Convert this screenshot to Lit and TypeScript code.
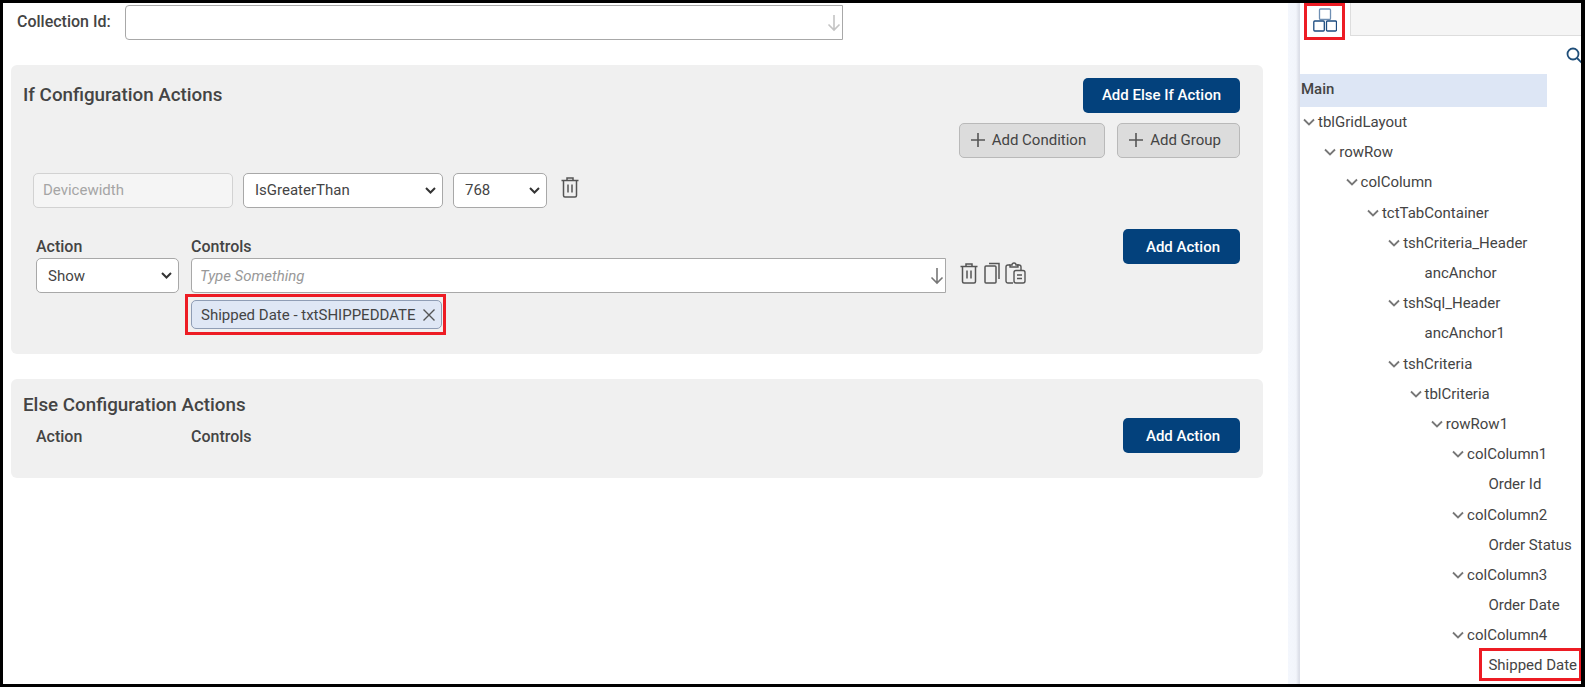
import { LitElement, html, css, svg } from 'lit';
import { customElement } from 'lit/decorators.js';

type Node = { label: string; level: number; open?: boolean; marked?: boolean };

const TREE: Node[] = [
    { label: 'tblGridLayout', level: 0, open: true },
    { label: 'rowRow', level: 1, open: true },
    { label: 'colColumn', level: 2, open: true },
    { label: 'tctTabContainer', level: 3, open: true },
    { label: 'tshCriteria_Header', level: 4, open: true },
    { label: 'ancAnchor', level: 5 },
    { label: 'tshSql_Header', level: 4, open: true },
    { label: 'ancAnchor1', level: 5 },
    { label: 'tshCriteria', level: 4, open: true },
    { label: 'tblCriteria', level: 5, open: true },
    { label: 'rowRow1', level: 6, open: true },
    { label: 'colColumn1', level: 7, open: true },
    { label: 'Order Id', level: 8 },
    { label: 'colColumn2', level: 7, open: true },
    { label: 'Order Status', level: 8 },
    { label: 'colColumn3', level: 7, open: true },
    { label: 'Order Date', level: 8 },
    { label: 'colColumn4', level: 7, open: true },
    { label: 'Shipped Date', level: 8, marked: true },
];

const arrowDown = (color: string) => html`<svg class="arrow" width="14" height="18" viewBox="0 0 14 18" fill="none" stroke=${color} stroke-width="1.6">
    <path d="M7 1v15M1.5 10.5L7 16l5.5-5.5"></path></svg>`;

const trashIcon = html`<svg width="20" height="22" viewBox="0 0 20 22" fill="none" stroke="#555" stroke-width="1.5">
    <path d="M1.5 4.5h17M7 4.500V2h6v2.500M3.500 4.500V19.500a1.500 1.500 0 0 0 1.500 1.500h10a1.500 1.500 0 0 0 1.500-1.500V4.500M8 8.500v8M12 8.500v8"></path></svg>`;

const copyIcon = html`<svg width="16" height="22" viewBox="0 0 16 22" fill="none" stroke="#555" stroke-width="1.5">
    <path d="M5 1.500h10v15.500"></path><rect x="1" y="4" width="11" height="17" rx="1"></rect></svg>`;

const pasteIcon = html`<svg width="21" height="22" viewBox="0 0 21 22" fill="none" stroke="#555" stroke-width="1.4">
    <path d="M8 21H3a2 2 0 0 1-2-2V5a2 2 0 0 1 2-2h2M12 3h2a2 2 0 0 1 2 2v3"></path>
    <path d="M5 5V3h2a2 2 0 0 1 4 0h2v2z"></path>
    <rect x="9" y="8.500" width="11" height="12.500" rx="2"></rect>
    <path d="M12 13h5M12 16.500h5"></path></svg>`;

const plusIcon = html`<svg width="14" height="14" viewBox="0 0 14 14" stroke="#555" stroke-width="1.6">
    <path d="M7 0v14M0 7h14"></path></svg>`;

const blocksIcon = html`<svg width="24" height="24" viewBox="0 0 24 24" fill="none" stroke-width="1.300">
    <rect x="6.500" y="1" width="11" height="10.500" rx="1" stroke="#6f8fb3"></rect>
    <rect x="0.800" y="13" width="10.500" height="10" rx="1" stroke="#1d4c80"></rect>
    <rect x="13.500" y="13" width="10" height="10" rx="1" stroke="#1d4c80"></rect></svg>`;

const chevron = svg`<path d="M1 1.500L6 6.500L11 1.500" fill="none" stroke="#777" stroke-width="1.800"></path>`;

@customElement('app-root')
export class AppRoot extends LitElement {
    static styles = css`
        :host {
            display: block;
            width: 1585px;
            height: 687px;
            box-sizing: border-box;
            border: 3px solid #000;
            border-right-width: 4px;
            background: #fff;
            overflow: hidden;
            font-family: Roboto, "Liberation Sans", sans-serif;
            font-size: 15px;
            color: #444;
        }

        * {
            box-sizing: border-box;
        }

        .layout {
            display: flex;
            height: 100%;
        }

        .main {
            flex: none;
            width: 1285px;
        }

        .collection {
            display: flex;
            align-items: center;
            height: 35px;
            margin-top: 2px;
            padding-left: 14px;
            margin-bottom: 25px;
        }

        .collection label {
            width: 108px;
            padding-bottom: 3px;
            font-weight: 500;
            font-size: 16px;
        }

        .lookup {
            position: relative;
            display: flex;
            height: 35px;
        }

        .lookup input {
            width: 100%;
            height: 100%;
            border: 1px solid #a8a8a8;
            border-radius: 4px 0 0 4px;
            padding: 0 8px;
            font: italic 15px Roboto, sans-serif;
            background: #fff;
            outline: none;
        }

        .lookup input::placeholder {
            color: #999;
        }

        .lookup .arrow {
            position: absolute;
            right: 2px;
            top: 9px;
        }

        .collection .lookup {
            width: 718px;
        }

        .panel {
            width: 1252px;
            margin-left: 8px;
            margin-bottom: 25px;
            padding: 13px 23px 25px 12px;
            background: #f0f0f0;
            border-radius: 6px;
        }

        .head {
            display: flex;
            justify-content: space-between;
            align-items: center;
            height: 35px;
        }

        .title {
            font-size: 18.800px;
            font-weight: 500;
            line-height: 24px;
            padding-bottom: 2px;
        }

        .title-short {
            height: 24px;
            padding: 1px 0 0;
        }

        .primary {
            height: 35px;
            border: none;
            border-radius: 5px;
            background: #03417c;
            color: #fff;
            font: 500 15px Roboto, sans-serif;
            padding: 0 20px;
            text-align: right;
        }

        .else-if {
            width: 157px;
            padding: 0 19px 2px 0;
        }

        .add-action {
            width: 117px;
            margin-left: auto;
        }

        .tools {
            display: flex;
            justify-content: flex-end;
            gap: 12px;
            margin-top: 10px;
        }

        .secondary {
            display: flex;
            align-items: center;
            gap: 7px;
            height: 35px;
            padding: 0 18px 1px 11px;
            background: #dcdcdc;
            border: 1px solid #b9b9b9;
            border-radius: 5px;
            color: #444;
            font: 15px Roboto, sans-serif;
        }

        .condition {
            display: flex;
            align-items: center;
            gap: 10px;
            margin-top: 15px;
            padding-left: 10px;
        }

        .disabled {
            width: 200px;
            height: 35px;
            padding: 0 9px 2px;
            border: 1px solid #d2d2d2;
            border-radius: 5px;
            background: #f5f5f5;
            color: #999;
            font: 15px Roboto, sans-serif;
        }

        .disabled::placeholder {
            color: #a5a5a5;
        }

        select {
            appearance: none;
            height: 35px;
            padding: 0 11px;
            border: 1px solid #a8a8a8;
            border-radius: 5px;
            background: #fff url("data:image/svg+xml,%3Csvg xmlns='http://www.w3.org/2000/svg' width='11' height='7' viewBox='0 0 11 7'%3E%3Cpath d='M1 1l4.500 4.500L10 1' fill='none' stroke='%23333' stroke-width='2'/%3E%3C/svg%3E") no-repeat right 6px center;
            color: #444;
            font: 15px Roboto, sans-serif;
        }

        .condition select {
            padding-bottom: 2px;
        }

        .condition .icon {
            display: flex;
            margin: -8px 0 0 3px;
        }

        .actions {
            display: flex;
            align-items: flex-start;
            margin-top: 21px;
            padding-left: 13px;
        }

        .actions.tight {
            margin-top: 2px;
        }

        .column-label {
            height: 29px;
            padding-top: 6px;
            line-height: 23px;
            font-weight: 500;
            font-size: 16px;
        }

        .tight .column-label {
            padding-top: 7px;
        }

        .col-action {
            width: 143px;
            margin-right: 12px;
        }

        .col-action select {
            width: 100%;
        }

        .col-controls {
            width: 755px;
        }

        .icons {
            display: flex;
            align-items: center;
            gap: 5px;
            margin: 33px 0 0 13px;
        }

        .chip {
            position: relative;
            display: inline-flex;
            align-items: center;
            gap: 7px;
            height: 29px;
            margin-top: 7px;
            padding: 0 5px 0 9px;
            width: 251px;
            background: #dfe7f5;
            border: 1px solid #8f9db5;
            border-radius: 5px;
            white-space: nowrap;
        }

        .mark {
            position: absolute;
            border: 3px solid #ed1c24;
            pointer-events: none;
        }

        .chip .mark {
            inset: -7px -5px -7px -7px;
        }

        .side {
            flex: none;
            width: 293px;
            padding-left: 12px;
            background: linear-gradient(to right, #f4f7fd 0, #f2f5fb 8px, #dcdfe8 11px, #dcdfe8 12px, #fff 12px);
            overflow: hidden;
        }

        .tabs {
            display: flex;
            height: 37px;
            padding-left: 4px;
        }

        .tab {
            display: flex;
            align-items: center;
            justify-content: center;
            width: 41px;
            height: 37px;
            padding-bottom: 4px;
            border: 3px solid #ed1c24;
            flex: none;
        }

        .tab-rest {
            width: 231px;
            height: 33px;
            margin-left: 5px;
            background: #f5f5f5;
            border-left: 1px solid #ddd;
            border-bottom: 1px solid #ddd;
        }

        .search {
            display: flex;
            justify-content: flex-end;
            height: 34px;
            padding-top: 7px;
            margin-right: -3px;
        }

        .root {
            display: flex;
            align-items: center;
            width: 247px;
            height: 33px;
            padding: 0 0 3px 1px;
            background: #dde6f5;
            font-weight: 500;
            font-size: 15px;
        }

        .tree {
            height: 30.200px;
            display: flex;
            align-items: center;
            white-space: nowrap;
            font-size: 15px;
            position: relative;
        }

        .tree .label {
            position: relative;
        }

        .tree svg {
            flex: none;
            width: 12px;
            margin-right: 3px;
        }

        .tree .mark {
            inset: -8px -5px -7px -9px;
        }
    `;

    render() {
        return html`
            <div class="layout">
                <div class="main">
                    <div class="collection">
                        <label>Collection Id:</label>
                        <div class="lookup">
                            <input type="text" />
                            ${arrowDown('#c4c4c4')}
                        </div>
                    </div>

                    <section class="panel">
                        <div class="head">
                            <div class="title">If Configuration Actions</div>
                            <button class="primary else-if">Add Else If Action</button>
                        </div>
                        <div class="tools">
                            <button class="secondary">${plusIcon}<span>Add Condition</span></button>
                            <button class="secondary">${plusIcon}<span>Add Group</span></button>
                        </div>
                        <div class="condition">
                            <input class="disabled" disabled placeholder="Devicewidth" />
                            <select style="width: 200px"><option>IsGreaterThan</option></select>
                            <select style="width: 94px"><option>768</option></select>
                            <span class="icon">${trashIcon}</span>
                        </div>
                        <div class="actions">
                            <div class="col-action">
                                <div class="column-label">Action</div>
                                <select><option>Show</option></select>
                            </div>
                            <div class="col-controls">
                                <div class="column-label">Controls</div>
                                <div class="lookup">
                                    <input type="text" placeholder="Type Something" />
                                    ${arrowDown('#777')}
                                </div>
                                <div class="chip">
                                    <span>Shipped Date - txtSHIPPEDDATE</span>
                                    <svg width="12" height="12" viewBox="0 0 12 12" stroke="#555" stroke-width="1.400"><path d="M0.500 0.500l11 11M11.500 0.500l-11 11"></path></svg>
                                    <span class="mark"></span>
                                </div>
                            </div>
                            <div class="icons">${trashIcon}${copyIcon}${pasteIcon}</div>
                            <button class="primary add-action">Add Action</button>
                        </div>
                    </section>

                    <section class="panel">
                        <div class="title title-short">Else Configuration Actions</div>
                        <div class="actions tight">
                            <div class="col-action"><div class="column-label">Action</div></div>
                            <div class="col-controls"><div class="column-label">Controls</div></div>
                            <button class="primary add-action">Add Action</button>
                        </div>
                    </section>
                </div>

                <aside class="side">
                    <div class="tabs">
                        <div class="tab">${blocksIcon}</div>
                        <div class="tab-rest"></div>
                    </div>
                    <div class="search">
                        <svg width="18" height="18" viewBox="0 0 18 18" fill="none" stroke="#1f4e79" stroke-width="1.800">
                            <circle cx="7" cy="7" r="5.500"></circle><path d="M11 11l6 6"></path>
                        </svg>
                    </div>
                    <div class="root">Main</div>
                    ${TREE.map((node) => html`
                        <div class="tree" style="padding-left: ${(node.open ? 3 : 18) + node.level * 21.3}px">
                            ${node.open ? html`<svg height="8" viewBox="0 0 12 8">${chevron}</svg>` : ''}
                            <span class="label">${node.label}${node.marked ? html`<span class="mark"></span>` : ''}</span>
                        </div>
                    `)}
                </aside>
            </div>
        `;
    }
}
